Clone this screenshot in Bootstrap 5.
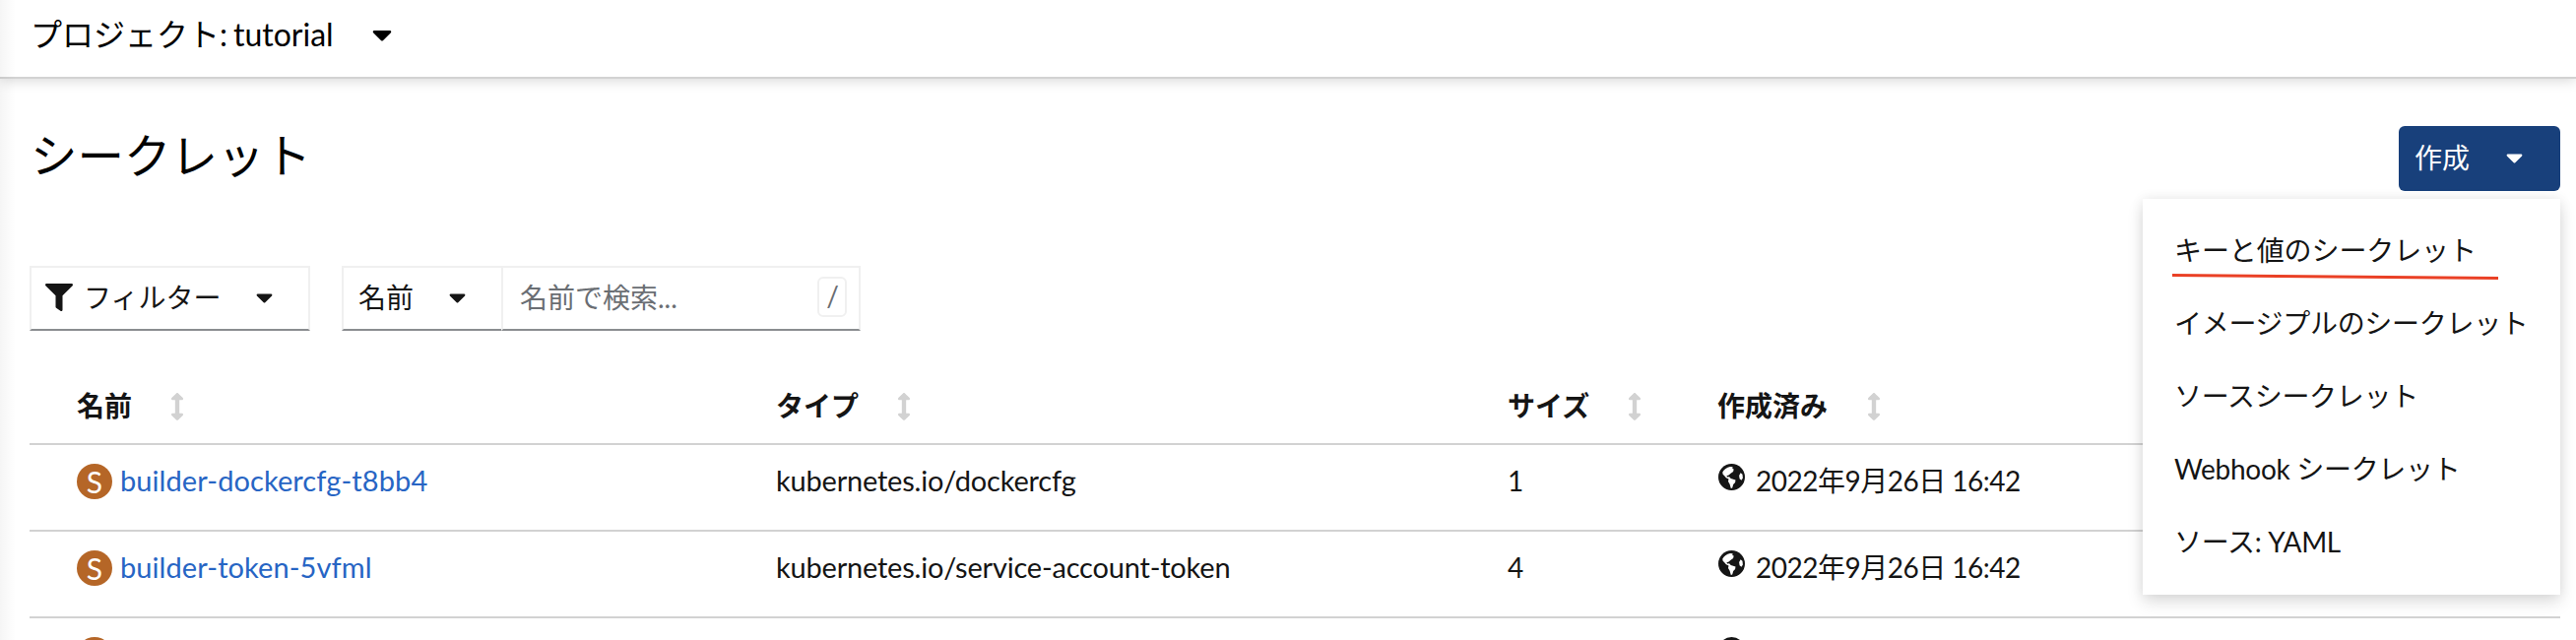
<!DOCTYPE html>
<html lang="ja">
<head>
<meta charset="utf-8">
<meta name="viewport" content="width=device-width, initial-scale=1">
<title>シークレット</title>
<link href="https://cdn.jsdelivr.net/npm/bootstrap@5.3.0/dist/css/bootstrap.min.css" rel="stylesheet">
<style>
  body { font-family: Lato, "Noto Sans CJK JP", sans-serif; font-size: 28px; line-height: 42px; color: #151515; background: #fff; overflow: hidden; height: 650px; }
  main { height: 570px; overflow: hidden; }
  svg { display: block; fill: currentColor; flex: none; }
  .project-bar { height: 80px; border-bottom: 2px solid #d2d2d2; box-shadow: 0 2px 12px rgba(3,3,3,.16); padding: 0 0 8px 31px; font-size: 32px; color: #000; position: relative; }
  .project-bar .latin { margin-left: 6px; }
  .page-edge { position: absolute; top: 0; left: 0; width: 16px; height: 650px; background: linear-gradient(to right, rgba(3,3,3,.04), rgba(3,3,3,0)); pointer-events: none; }
  .page-head { height: 190px; padding: 48px 16px 0 31px; }
  .page-head h1 { font-size: 47.5px; line-height: 60px; font-weight: 400; margin: 0; color: #000; }
  .create-btn { width: 164px; height: 66px; background: #18407b; color: #fff; border: 0; border-radius: 6px; padding: 0 38px 2px 16px; font-size: 28px; line-height: 42px; }
  .create-btn:hover { background: #18407b; color: #fff; }
  .create-menu.dropdown-menu { top: 74px; right: 0; left: auto; width: 424px; height: 402px; padding: 16px 0; margin: 0; border: 0; border-radius: 0; font-size: 28px; color: #151515; box-shadow: 0 8px 16px rgba(3,3,3,.12), 0 0 12px rgba(3,3,3,.08); }
  .create-menu .dropdown-item { height: 74px; padding: 15px 32px; line-height: 42px; color: #151515; letter-spacing: -.3px; }
  .create-menu .first-item { letter-spacing: -.1px; }
  .mark-line { position: absolute; left: 29px; top: 75px; }
  .tools { padding-left: 30px; gap: 32px; }
  .tool-box { height: 66px; border: 2px solid #f0f0f0; border-bottom-color: #8a8d90; padding-bottom: 2px; }
  .tool-box.filter { width: 285px; padding-left: 14px; }
  .tool-box.select { width: 162px; padding-left: 15px; border-right: 0; }
  .tool-box.search { width: 365px; padding: 0 12px 2px 17px; color: #6a6e73; }
  .key-hint { width: 30px; height: 41px; border: 2px solid #f0f0f0; border-radius: 6px; line-height: 34px; margin-top: -1px; padding-left: 1px; }
  .secrets.table { width: 2570px; margin: 38px 0 0 30px; table-layout: fixed; border-collapse: separate; border-spacing: 0; --bs-table-bg: transparent; }
  .secrets th, .secrets td { padding: 0 0 0 16px; border-bottom: 2px solid #d2d2d2; color: #151515; vertical-align: top; white-space: nowrap; }
  .secrets th:first-child, .secrets td:first-child { padding-left: 48px !important; }
  .secrets th { height: 78px; font-weight: 700; padding-top: 17px !important; }
  .secrets td { height: 88px; padding-top: 15px !important; }
  .secrets th svg { color: #d2d2d2; margin-top: 2px; }
  .secrets a { color: #2765c4; text-decoration: none; font-size: 29px; letter-spacing: .08px; }
  .kind { width: 36px; height: 36px; border-radius: 50%; background: #b56627; color: #fff; line-height: 36px; text-align: center; font-size: 30px; margin: 4px 8px 0 0; }
  .type-name { font-size: 29px; letter-spacing: -.2px; }
  .stamp { letter-spacing: -.5px; }
  .globe { margin: 4px 11px 0 1px; }
</style>
</head>
<body class="position-relative">
<svg class="d-none">
  <symbol id="caret" viewBox="0 0 320 512"><path d="M31.3 192h257.3c17.8 0 26.7 21.5 14.1 34.1L174.1 354.8c-7.8 7.8-20.5 7.8-28.3 0L17.2 226.1C4.6 213.5 13.5 192 31.3 192z"/></symbol>
  <symbol id="sort" viewBox="0 0 256 512" preserveAspectRatio="none"><path d="M214.059 377.941H168V134.059h46.059c21.382 0 32.09-25.851 16.971-40.971L144.971 7.029c-9.373-9.373-24.568-9.373-33.941 0L24.971 93.088c-15.119 15.119-4.411 40.971 16.971 40.971H88v243.882H41.941c-21.382 0-32.09 25.851-16.971 40.971l86.059 86.059c9.373 9.373 24.568 9.373 33.941 0l86.059-86.059c15.12-15.119 4.412-40.971-16.97-40.971z"/></symbol>
  <symbol id="globe" viewBox="0 0 27 27"><circle cx="13.5" cy="13.5" r="13.5"/><path fill="#fff" d="M4.300 8.500C6 5.500 8.500 3.700 12 2.900l2.600.3-.3 1.800 1.400.5-.6 2.600-2.800 1.800-1.600 1.700-2.300.6.8 1.200 1.900-.2 1.600 1.700 4.800 1.500-.4 2.700-1.900 2-1 3.300-1.400.5-1.200-4.200-1.600-2.800.5-2.400-2.600-1.300-1.700-2L4.500 10.500zM22.600 9.200l1.900 1.500.4 3.700-1.400 2.400-1.900-1.600-.5-3.300z"/></symbol>
</svg>

<header class="project-bar d-flex align-items-center">
  <span>プロジェクト:<span class="latin">tutorial</span></span>
  <svg width="20" height="32" style="margin-left:39px"><use href="#caret"/></svg>
</header>

<main>
  <div class="page-head d-flex justify-content-between align-items-start">
    <h1>シークレット</h1>
    <div class="dropdown position-relative">
      <button type="button" class="create-btn btn d-flex align-items-center justify-content-between">作成<svg width="17" height="28"><use href="#caret"/></svg></button>
      <ul class="create-menu dropdown-menu show">
        <li><a class="dropdown-item first-item" href="#">キーと値のシークレット</a></li>
        <li><a class="dropdown-item" href="#">イメージプルのシークレット</a></li>
        <li><a class="dropdown-item" href="#">ソースシークレット</a></li>
        <li><a class="dropdown-item" href="#">Webhook シークレット</a></li>
        <li><a class="dropdown-item" href="#">ソース: YAML</a></li>
        <li><svg class="mark-line" width="334" height="10"><path d="M1 2.500L332 5.500" stroke="#ea4025" stroke-width="3" fill="none"/></svg></li>
      </ul>
    </div>
  </div>

  <div class="tools d-flex">
    <div class="tool-box filter d-flex align-items-center">
      <svg width="28" height="28" viewBox="0 0 512 512"><path d="M487.976 0H24.028C2.710 0-8.047 25.866 7.058 40.971L192 225.941V432c0 7.831 3.821 15.170 10.237 19.662l80 55.980C298.020 518.690 320 507.493 320 487.980V225.941l184.947-184.970C520.021 25.896 509.338 0 487.976 0z"/></svg>
      <span style="width:140px;margin:0 35px 0 11px">フィルター</span>
      <svg width="17" height="28"><use href="#caret"/></svg>
    </div>
    <div class="d-flex">
      <div class="tool-box select d-flex align-items-center">
        <span style="margin-right:36px">名前</span>
        <svg width="17" height="28"><use href="#caret"/></svg>
      </div>
      <div class="tool-box search d-flex align-items-center justify-content-between">
        <span>名前で検索...</span>
        <span class="key-hint text-center">/</span>
      </div>
    </div>
  </div>

  <table class="secrets table">
    <colgroup><col style="width:742px"><col style="width:743px"><col style="width:213px"><col></colgroup>
    <thead>
      <tr>
        <th><div class="d-flex align-items-center">名前<svg width="14" height="28" style="margin-left:39px"><use href="#sort"/></svg></div></th>
        <th><div class="d-flex align-items-center">タイプ<svg width="14" height="28" style="margin-left:39px"><use href="#sort"/></svg></div></th>
        <th><div class="d-flex align-items-center">サイズ<svg width="14" height="28" style="margin-left:39px"><use href="#sort"/></svg></div></th>
        <th><div class="d-flex align-items-center">作成済み<svg width="14" height="28" style="margin-left:40px"><use href="#sort"/></svg></div></th>
      </tr>
    </thead>
    <tbody>
      <tr>
        <td><div class="d-flex"><span class="kind">S</span><a href="#">builder-dockercfg-t8bb4</a></div></td>
        <td class="type-name">kubernetes.io/dockercfg</td>
        <td>1</td>
        <td><div class="d-flex"><svg class="globe" width="27" height="27"><use href="#globe"/></svg><span class="stamp">2022年9月26日 16:42</span></div></td>
      </tr>
      <tr>
        <td><div class="d-flex"><span class="kind">S</span><a href="#">builder-token-5vfml</a></div></td>
        <td class="type-name">kubernetes.io/service-account-token</td>
        <td>4</td>
        <td><div class="d-flex"><svg class="globe" width="27" height="27"><use href="#globe"/></svg><span class="stamp">2022年9月26日 16:42</span></div></td>
      </tr>
      <tr>
        <td><div class="d-flex"><span class="kind"></span></div></td>
        <td></td>
        <td></td>
        <td><div class="d-flex"><svg class="globe" width="27" height="27"><use href="#globe"/></svg></div></td>
      </tr>
    </tbody>
  </table>
</main>
<div class="page-edge"></div>
<script src="https://cdn.jsdelivr.net/npm/bootstrap@5.3.0/dist/js/bootstrap.bundle.min.js"></script>
</body>
</html>
